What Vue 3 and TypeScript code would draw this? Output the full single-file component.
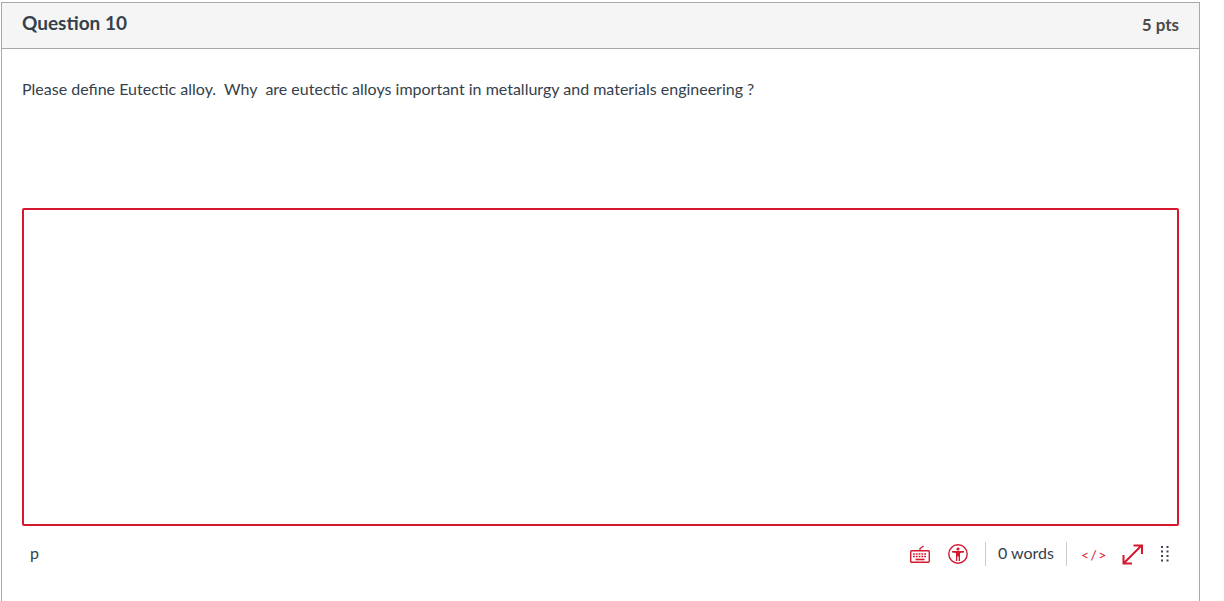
<template>
  <div class="question-card">
    <!-- header -->
    <div class="question-header">
      <span class="question-name">Question 10</span>
      <span class="question-pts">5 pts</span>
    </div>

    <div class="question-body">
      <p class="question-text">Please define Eutectic alloy.&nbsp; Why&nbsp; are eutectic alloys important in metallurgy and materials engineering ?</p>

      <div class="editor-area"></div>

      <!-- status bar -->
      <div class="status-bar">
        <span class="path">p</span>
        <div class="status-right">
          <svg class="icon-keyboard" width="20" height="18" viewBox="0 0 20 18" fill="none" stroke="#d6182e" aria-hidden="true">
            <rect x="0.7" y="5.7" width="18.6" height="11.6" rx="1" stroke-width="1.4" />
            <path d="M10 5.5V3.5L13.5 1" stroke-width="1.3" />
            <path d="M3 9h14M3 11.5h14" stroke-width="1.6" stroke-dasharray="1.8 1" />
            <path d="M5.5 14.5h9" stroke-width="1.6" />
          </svg>
          <svg class="icon-a11y" width="20" height="20" viewBox="0 0 20 20" aria-hidden="true">
            <circle cx="10" cy="10" r="9.2" fill="none" stroke="#d6182e" stroke-width="1.4" />
            <circle cx="10" cy="5" r="1.6" fill="#d6182e" />
            <path d="M4 7h12v1.6l-4 .5V17h-1.3v-4.6H9.3V17H8V9.1l-4-.5z" fill="#d6182e" />
          </svg>
          <span class="divider"></span>
          <span class="word-count">0 words</span>
          <span class="divider"></span>
          <span class="html-toggle">&lt;/&gt;</span>
          <svg class="icon-expand" width="21" height="21" viewBox="0 0 21 21" fill="none" stroke="#d6182e" stroke-width="2" aria-hidden="true">
            <path d="M2 19L19.5 1.5M11.5 1.5h8.5v8.5M1.5 11v8.5H10" />
          </svg>
          <svg class="icon-grip" width="8" height="16" viewBox="0 0 8 16" fill="#3a4652" aria-hidden="true">
            <rect v-for="dot in gripDots" :key="dot.key" :x="dot.x" :y="dot.y" width="2" height="2" />
          </svg>
        </div>
      </div>
    </div>
  </div>
</template>

<script setup lang="ts">
const gripDots: { key: string; x: number; y: number }[] = [];
for (let row = 0; row < 4; row++) {
  for (let col = 0; col < 2; col++) {
    gripDots.push({ key: `${row}-${col}`, x: col * 5.5, y: row * 4.5 });
  }
}
</script>

<style scoped>
.question-card {
  box-sizing: border-box;
  width: 1199px;
  height: 599px;
  margin: 2px 0 0 1px;
  border: 1px solid #a9a9a9;
  border-bottom: none;
  font-family: Lato, "Open Sans", sans-serif;
  color: #34414b;
  background: #fff;
}

.question-header {
  display: flex;
  align-items: center;
  justify-content: space-between;
  box-sizing: border-box;
  height: 46px;
  padding: 0 20px 3px;
  background: #f5f5f5;
  border-bottom: 1px solid #a9a9a9;
  font-weight: 700;
}

.question-name {
  margin-bottom: 3px;
  font-size: 19px;
}

.question-pts {
  font-size: 17px;
  color: #4a4a4a;
}

.question-body {
  padding: 0 20px;
}

.question-text {
  margin: 0;
  padding-top: 29px;
  font-size: 16px;
  line-height: 22px;
  height: 159px;
  box-sizing: border-box;
}

.editor-area {
  box-sizing: border-box;
  height: 318px;
  border: 2px solid #d6182e;
  border-radius: 2px;
}

.status-bar {
  display: flex;
  align-items: center;
  justify-content: space-between;
  height: 24px;
  margin-top: 16px;
  padding-left: 8px;
  padding-right: 10px;
}

.path {
  margin-bottom: 3px;
  font-size: 16px;
}

.status-right {
  display: flex;
  align-items: center;
}

.icon-keyboard {
  margin-right: 18px;
}

.icon-a11y {
  margin-right: 17px;
}

.divider {
  width: 1px;
  height: 24px;
  background: #c7cdd1;
}

.word-count {
  margin: 0 12px 3px;
  font-size: 16px;
}

.html-toggle {
  margin: 0 14px 0 14px;
  font-size: 14px;
  letter-spacing: 1.5px;
  color: #d6182e;
}

.icon-expand {
  margin-right: 18px;
}
</style>

<style>
body {
  overflow: hidden;
}
</style>
